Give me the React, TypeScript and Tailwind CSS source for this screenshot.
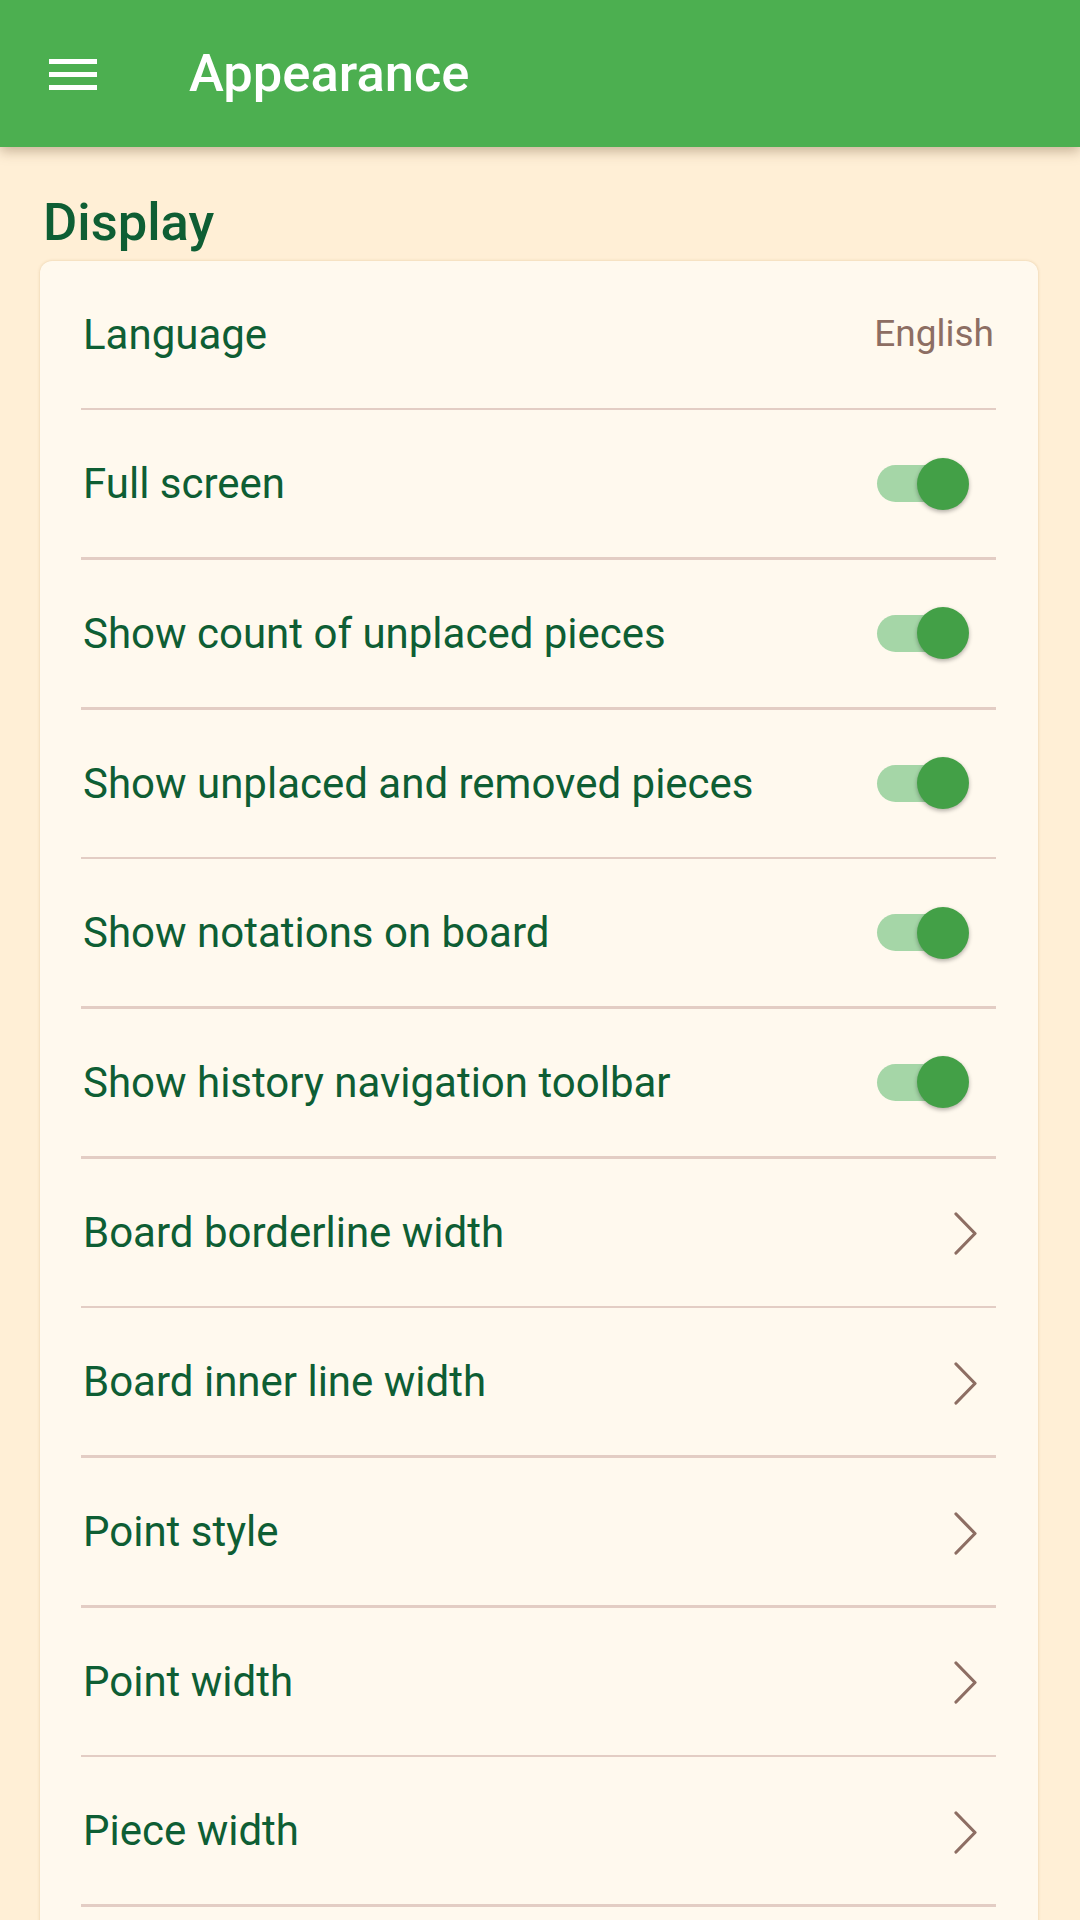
import { ReactNode } from 'react';

type Row =
  | { label: string; kind: 'value'; value: string }
  | { label: string; kind: 'toggle' }
  | { label: string; kind: 'link' };

const rows: Row[] = [
  { label: 'Language', kind: 'value', value: 'English' },
  { label: 'Full screen', kind: 'toggle' },
  { label: 'Show count of unplaced pieces', kind: 'toggle' },
  { label: 'Show unplaced and removed pieces', kind: 'toggle' },
  { label: 'Show notations on board', kind: 'toggle' },
  { label: 'Show history navigation toolbar', kind: 'toggle' },
  { label: 'Board borderline width', kind: 'link' },
  { label: 'Board inner line width', kind: 'link' },
  { label: 'Point style', kind: 'link' },
  { label: 'Point width', kind: 'link' },
  { label: 'Piece width', kind: 'link' },
];

function MenuIcon() {
  return (
    <svg width="48" height="32" viewBox="0 0 48 32" className="block">
      <rect x="0" y="0" width="48" height="5" fill="#fff" />
      <rect x="0" y="13" width="48" height="5" fill="#fff" />
      <rect x="0" y="26" width="48" height="5" fill="#fff" />
    </svg>
  );
}

function Toggle() {
  return (
    <div className="relative w-[92px] h-[52px] mr-[27px]">
      <div className="absolute left-0 top-[7.5px] w-[87px] h-[37px] rounded-full bg-[#a5d6a7]" />
      <div className="absolute right-0 top-0 w-[52px] h-[52px] rounded-full bg-[#43a047] shadow-[0_2px_4px_rgba(0,0,0,0.3)]" />
    </div>
  );
}

function Chevron() {
  return (
    <svg width="26" height="44" viewBox="0 0 26 44" className="mr-[17px] mt-[4px]">
      <path d="M3 2 L22 21.5 L3 41" fill="none" stroke="#8d6e63" strokeWidth="3.2" strokeLinecap="round" strokeLinejoin="round" />
    </svg>
  );
}

function SettingRow({ row }: { row: Row }) {
  let trailing: ReactNode = null;
  if (row.kind === 'value') {
    trailing = <span className="text-[37px] text-[#8d6e63] mr-[2px]">{row.value}</span>;
  } else if (row.kind === 'toggle') {
    trailing = <Toggle />;
  } else {
    trailing = <Chevron />;
  }

  return (
    <div>
      <div className="h-[147px] flex items-center justify-between pl-[2px]">
        <span className="text-[42px] text-[#0e5e34]">{row.label}</span>
        {trailing}
      </div>
      <div className="h-[2.7px] bg-[#e3cdc4]" />
    </div>
  );
}

export default function App() {
  return (
    <div
      className="min-h-screen h-[1920px] overflow-hidden bg-[#ffefd6]"
      style={{ fontFamily: 'Roboto, "Noto Sans", sans-serif' }}
    >
      {/* Top bar */}
      <header className="relative z-10 h-[147px] bg-[#4caf50] flex items-center shadow-[0_4px_12px_rgba(90,60,30,0.35)]">
        <div className="ml-[49px] mt-[3px]">
          <MenuIcon />
        </div>
        <h1 className="ml-[92px] text-[52.5px] font-medium text-white leading-none">Appearance</h1>
      </header>

      <main className="pl-[40px] pr-[42px]">
        <h2 className="mt-[49px] ml-[3px] text-[52.5px] font-medium leading-none text-[#0e5e34]">Display</h2>

        {/* Card */}
        <div className="mt-[12px] rounded-[12px] bg-[#fff9ee] shadow-[0_0_3px_rgba(200,160,100,0.45)] pl-[41px] pr-[42px]">
          {rows.map((row) => (
            <SettingRow key={row.label} row={row} />
          ))}
          <div className="h-[60px]" />
        </div>
      </main>
    </div>
  );
}
